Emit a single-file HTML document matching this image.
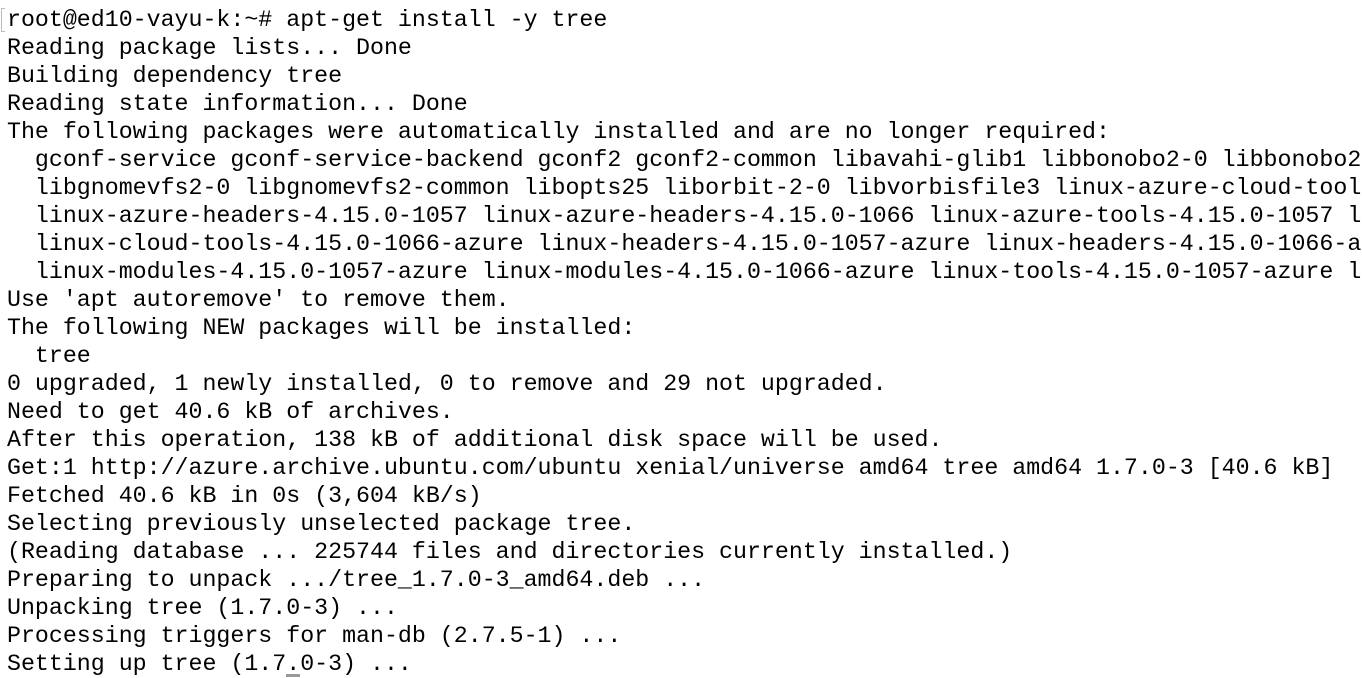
<!DOCTYPE html>
<html><head><style>
html,body{margin:0;padding:0;background:#fff;width:1362px;height:678px;overflow:hidden}
pre{position:absolute;left:7px;top:6px;margin:0;font-family:"Liberation Mono",monospace;font-size:23.27px;line-height:28px;color:#000;white-space:pre}
.b{position:absolute;left:1px;top:8px;width:3px;height:22px;border:1px solid #bbb;border-right:none}
.u{position:absolute;left:286px;top:674px;width:14px;height:3px;background:#999}
</style></head><body>
<div class="b"></div>
<pre>root@ed10-vayu-k:~# apt-get install -y tree
Reading package lists... Done
Building dependency tree
Reading state information... Done
The following packages were automatically installed and are no longer required:
  gconf-service gconf-service-backend gconf2 gconf2-common libavahi-glib1 libbonobo2-0 libbonobo2
  libgnomevfs2-0 libgnomevfs2-common libopts25 liborbit-2-0 libvorbisfile3 linux-azure-cloud-tool
  linux-azure-headers-4.15.0-1057 linux-azure-headers-4.15.0-1066 linux-azure-tools-4.15.0-1057 l
  linux-cloud-tools-4.15.0-1066-azure linux-headers-4.15.0-1057-azure linux-headers-4.15.0-1066-a
  linux-modules-4.15.0-1057-azure linux-modules-4.15.0-1066-azure linux-tools-4.15.0-1057-azure l
Use 'apt autoremove' to remove them.
The following NEW packages will be installed:
  tree
0 upgraded, 1 newly installed, 0 to remove and 29 not upgraded.
Need to get 40.6 kB of archives.
After this operation, 138 kB of additional disk space will be used.
Get:1 http://azure.archive.ubuntu.com/ubuntu xenial/universe amd64 tree amd64 1.7.0-3 [40.6 kB]
Fetched 40.6 kB in 0s (3,604 kB/s)
Selecting previously unselected package tree.
(Reading database ... 225744 files and directories currently installed.)
Preparing to unpack .../tree_1.7.0-3_amd64.deb ...
Unpacking tree (1.7.0-3) ...
Processing triggers for man-db (2.7.5-1) ...
Setting up tree (1.7.0-3) ...</pre>
<div class="u"></div>
</body></html>
